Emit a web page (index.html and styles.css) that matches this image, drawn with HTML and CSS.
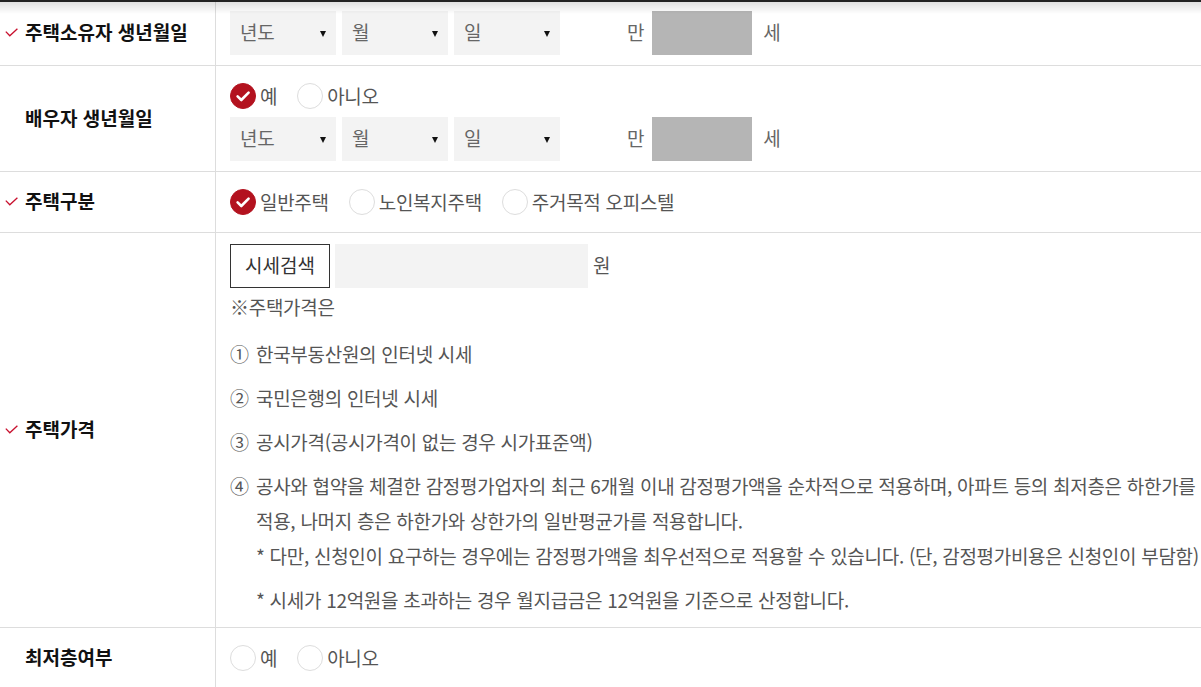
FILE: index.html
```html
<!doctype html>
<html lang="ko">
<head>
<meta charset="utf-8">
<title>주택연금 예상연금 조회</title>
<link rel="stylesheet" href="styles.css">
</head>
<body>

<div class="topShadow"></div>

<table class="form">
  <tr class="rowBirth">
    <th><svg class="req" width="13" height="9" viewBox="0 0 13 9"><path d="M0.8 3.6 L4.8 7.8 L12.4 0.8" fill="none" stroke="#c8102e" stroke-width="1.3"/></svg>주택소유자 생년월일</th>
    <td>
      <div class="dateLine">
        <div class="select w106"><span>년도</span><i class="arrow"></i></div>
        <div class="select w106"><span>월</span><i class="arrow"></i></div>
        <div class="select w106"><span>일</span><i class="arrow"></i></div>
        <span class="age">만</span>
        <div class="ageBox"></div>
        <span class="ageUnit">세</span>
      </div>
    </td>
  </tr>

  <tr class="rowSpouse">
    <th>배우자 생년월일</th>
    <td>
      <div class="radios spouseRadios">
        <label class="radio on"><span class="dot"><svg width="26" height="26" viewBox="0 0 26 26"><path d="M7.6 13.4 L11.3 17 L18.6 9.6" fill="none" stroke="#fff" stroke-width="2.6" stroke-linecap="round" stroke-linejoin="round"/></svg></span>예</label>
        <label class="radio"><span class="dot"></span>아니오</label>
      </div>
      <div class="dateLine">
        <div class="select w106"><span>년도</span><i class="arrow"></i></div>
        <div class="select w106"><span>월</span><i class="arrow"></i></div>
        <div class="select w106"><span>일</span><i class="arrow"></i></div>
        <span class="age">만</span>
        <div class="ageBox"></div>
        <span class="ageUnit">세</span>
      </div>
    </td>
  </tr>

  <tr class="rowType">
    <th><svg class="req" width="13" height="9" viewBox="0 0 13 9"><path d="M0.8 3.6 L4.8 7.8 L12.4 0.8" fill="none" stroke="#c8102e" stroke-width="1.3"/></svg>주택구분</th>
    <td>
      <div class="radios">
        <label class="radio on"><span class="dot"><svg width="26" height="26" viewBox="0 0 26 26"><path d="M7.6 13.4 L11.3 17 L18.6 9.6" fill="none" stroke="#fff" stroke-width="2.6" stroke-linecap="round" stroke-linejoin="round"/></svg></span>일반주택</label>
        <label class="radio"><span class="dot"></span>노인복지주택</label>
        <label class="radio"><span class="dot"></span>주거목적 오피스텔</label>
      </div>
    </td>
  </tr>

  <tr class="rowPrice">
    <th><svg class="req" width="13" height="9" viewBox="0 0 13 9"><path d="M0.8 3.6 L4.8 7.8 L12.4 0.8" fill="none" stroke="#c8102e" stroke-width="1.3"/></svg>주택가격</th>
    <td>
      <div class="priceLine">
        <button class="btnSearch" type="button">시세검색</button>
        <div class="priceInput"></div>
        <span class="won">원</span>
      </div>
      <p class="note">※주택가격은</p>
      <ul class="priceList">
        <li><span class="num">①</span>한국부동산원의 인터넷 시세</li>
        <li><span class="num">②</span>국민은행의 인터넷 시세</li>
        <li><span class="num">③</span>공시가격(공시가격이 없는 경우 시가표준액)</li>
        <li><span class="num">④</span>공사와 협약을 체결한 감정평가업자의 최근 6개월 이내 감정평가액을 순차적으로 적용하며, 아파트 등의 최저층은 하한가를 적용, 나머지 층은 하한가와 상한가의 일반평균가를 적용합니다.
          <p class="sub">* 다만, 신청인이 요구하는 경우에는 감정평가액을 최우선적으로 적용할 수 있습니다. (단, 감정평가비용은 신청인이 부담함)</p>
          <p class="sub sub2">* 시세가 12억원을 초과하는 경우 월지급금은 12억원을 기준으로 산정합니다.</p>
        </li>
      </ul>
    </td>
  </tr>

  <tr class="rowFloor">
    <th>최저층여부</th>
    <td>
      <div class="radios">
        <label class="radio"><span class="dot"></span>예</label>
        <label class="radio"><span class="dot"></span>아니오</label>
      </div>
    </td>
  </tr>
</table>

</body>
</html>
```

FILE: styles.css
```css
html, body {
  margin: 0;
  padding: 0;
  background: #fff;
  overflow-x: hidden;
}
body {
  font-family: "Noto Sans CJK KR", "Noto Sans", sans-serif;
  font-size: 19px;
  color: #555;
  letter-spacing: -0.3px;
}
.topShadow {
  position: fixed;
  top: 0;
  left: 0;
  right: 0;
  height: 14px;
  background: linear-gradient(to bottom, #222 0, #222 2px, rgba(0,0,0,0.12) 2px, rgba(0,0,0,0) 14px);
  z-index: 5;
}
.form {
  width: 100%;
  border-collapse: collapse;
}
.form th,
.form td {
  border-bottom: 1px solid #ddd;
  vertical-align: middle;
}
.form th {
  width: 190px;
  padding: 0 0 3px 25px;
  border-right: 1px solid #ddd;
  text-align: left;
  font-weight: 700;
  color: #111;
  letter-spacing: 0;
  white-space: nowrap;
}
.form td {
  padding: 11px 0 10px 14px;
}
.req {
  margin-left: -20px;
  margin-right: 7px;
  vertical-align: 3px;
}

.rowBirth td { height: 44px; }
.rowSpouse td { padding-top: 15px; }
.rowType td { padding: 15px 0 15px 14px; }
.rowFloor td { padding: 15px 0 15px 14px; }

.dateLine {
  display: flex;
  align-items: center;
  height: 44px;
}
.select {
  display: flex;
  align-items: center;
  justify-content: space-between;
  box-sizing: border-box;
  height: 44px;
  padding: 0 10px 3px;
  margin-right: 6px;
  background: #f3f3f3;
  color: #666;
}
.w106 { width: 106px; }
.arrow {
  width: 0;
  height: 0;
  border-left: 3.5px solid transparent;
  border-right: 3.5px solid transparent;
  border-top: 6px solid #111;
  margin-top: 5px;
}
.age {
  margin: 0 0 3px 61px;
  color: #666;
}
.ageBox {
  width: 100px;
  height: 44px;
  margin-left: 8px;
  background: #b5b5b5;
}
.ageUnit {
  margin: 0 0 3px 11px;
  color: #666;
}

.radios {
  display: flex;
  align-items: center;
  height: 30px;
}
.spouseRadios {
  margin-bottom: 6px;
}
.radio {
  display: flex;
  align-items: center;
  margin-right: 20px;
  padding-bottom: 2px;
  color: #555;
}
.dot {
  display: block;
  box-sizing: border-box;
  width: 26px;
  height: 26px;
  margin: 2px 4px 0 0;
  border: 1px solid #ddd;
  border-radius: 50%;
  background: #fff;
}
.dot svg {
  display: block;
  margin: -1px;
}
.radio.on .dot {
  border-color: #b3121f;
  background: #b3121f;
}

.priceLine {
  display: flex;
  align-items: center;
}
.btnSearch {
  box-sizing: border-box;
  width: 100px;
  height: 44px;
  padding: 0 0 3px;
  border: 1px solid #333;
  background: #fff;
  font: inherit;
  color: #333;
}
.priceInput {
  width: 253px;
  height: 44px;
  margin-left: 5px;
  background: #f3f3f3;
}
.won {
  margin: 0 0 3px 5px;
}
.note {
  margin: 5px 0 0;
  line-height: 28px;
}
.priceList {
  list-style: none;
  margin: 15px 0 0;
  padding: 0 0 0 26px;
}
.priceList li {
  line-height: 35px;
  margin-bottom: 9px;
}
.priceList li:last-child {
  margin-bottom: 0;
}
.num {
  display: inline-block;
  width: 26px;
  margin-left: -26px;
}
.sub {
  margin: 0;
  white-space: nowrap;
}
.sub2 {
  margin-top: 9px;
}
```
